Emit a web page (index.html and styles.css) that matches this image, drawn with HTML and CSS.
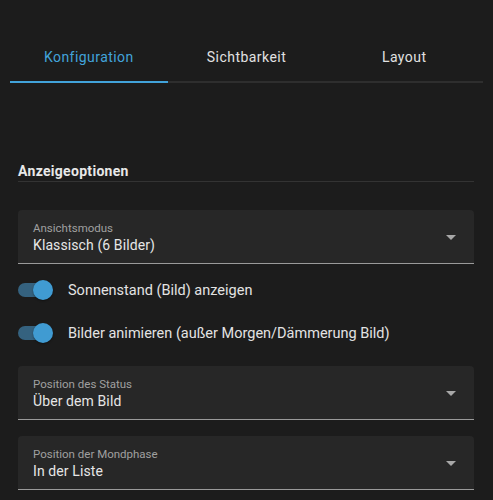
FILE: index.html
```html
<!DOCTYPE html>
<html lang="de">

<head>
  <meta charset="UTF-8">
  <meta name="viewport" content="width=device-width, initial-scale=1.0">
  <title>Karten-Editor</title>
  <link rel="stylesheet" href="styles.css">
</head>

<body>
  <div class="tabs">
    <div class="tab active">Konfiguration</div>
    <div class="tab">Sichtbarkeit</div>
    <div class="tab">Layout</div>
  </div>

  <div class="content">
    <h2 class="section-title">Anzeigeoptionen</h2>

    <div class="select">
      <div class="select-text">
        <span class="select-label">Ansichtsmodus</span>
        <span class="select-value">Klassisch (6 Bilder)</span>
      </div>
      <span class="arrow"></span>
    </div>

    <div class="switch-row first">
      <span class="switch"><span class="knob"></span></span>
      <span class="switch-label">Sonnenstand (Bild) anzeigen</span>
    </div>
    <div class="switch-row">
      <span class="switch"><span class="knob"></span></span>
      <span class="switch-label">Bilder animieren (außer Morgen/Dämmerung Bild)</span>
    </div>

    <div class="select spaced">
      <div class="select-text">
        <span class="select-label">Position des Status</span>
        <span class="select-value">Über dem Bild</span>
      </div>
      <span class="arrow"></span>
    </div>

    <div class="select spaced">
      <div class="select-text">
        <span class="select-label">Position der Mondphase</span>
        <span class="select-value">In der Liste</span>
      </div>
      <span class="arrow"></span>
    </div>
  </div>
</body>

</html>
```

FILE: styles.css
```css
body {
  margin: 0;
  background-color: #1c1c1c;
  color: #e1e1e1;
  font-family: Roboto, "Noto Sans", sans-serif;
}

/* tab bar */
.tabs {
  display: flex;
  margin: 0 10px;
  padding-top: 33px;
  border-bottom: 2px solid #2e2e2e;
}

.tab {
  flex: 1;
  height: 48px;
  display: flex;
  align-items: center;
  justify-content: center;
  font-size: 14px;
  font-weight: 400;
  letter-spacing: 0.45px;
  color: #e1e1e1;
  margin-bottom: -2px;
  border-bottom: 2px solid transparent;
}

.tab.active {
  color: #42a3da;
  border-bottom-color: #42a3da;
}

.content {
  padding: 0 19px 0 18px;
}

.section-title {
  margin: 78px 0 0;
  font-size: 14px;
  font-weight: 700;
  line-height: 20px;
  letter-spacing: 0.3px;
  color: #e8e8e8;
  border-bottom: 1px solid #333;
}

/* select fields */
.select {
  display: flex;
  align-items: center;
  margin-top: 28px;
  padding: 10px 18px 9px 15px;
  background-color: #272727;
  border-radius: 4px 4px 0 0;
  border-bottom: 1px solid #9a9a9a;
}

.select.spaced {
  margin-top: 13px;
}

.select + .select.spaced {
  margin-top: 16px;
}

.select-text {
  flex: 1;
  display: flex;
  flex-direction: column;
}

.select-label {
  font-size: 11.5px;
  line-height: 16px;
  color: #a0a0a0;
}

.select-value {
  font-size: 14px;
  line-height: 18px;
  letter-spacing: 0.1px;
  color: #e6e6e6;
}

.arrow {
  width: 0;
  height: 0;
  border-left: 5px solid transparent;
  border-right: 5px solid transparent;
  border-top: 5px solid #a8a8a8;
  margin-top: 1px;
}

/* switches */
.switch-row {
  display: flex;
  align-items: center;
  height: 40px;
  margin-top: 3px;
}

.switch-row.first {
  margin-top: 6px;
}

.switch {
  position: relative;
  width: 34px;
  height: 14px;
  border-radius: 7px;
  background-color: #35627f;
}

.knob {
  position: absolute;
  top: -3px;
  right: -1px;
  width: 20px;
  height: 20px;
  border-radius: 50%;
  background-color: #409bd2;
  box-shadow: 0 1px 2px rgba(0, 0, 0, 0.4);
}

.switch-label {
  margin-left: 16px;
  font-size: 14.5px;
  color: #e3e3e3;
}
```
